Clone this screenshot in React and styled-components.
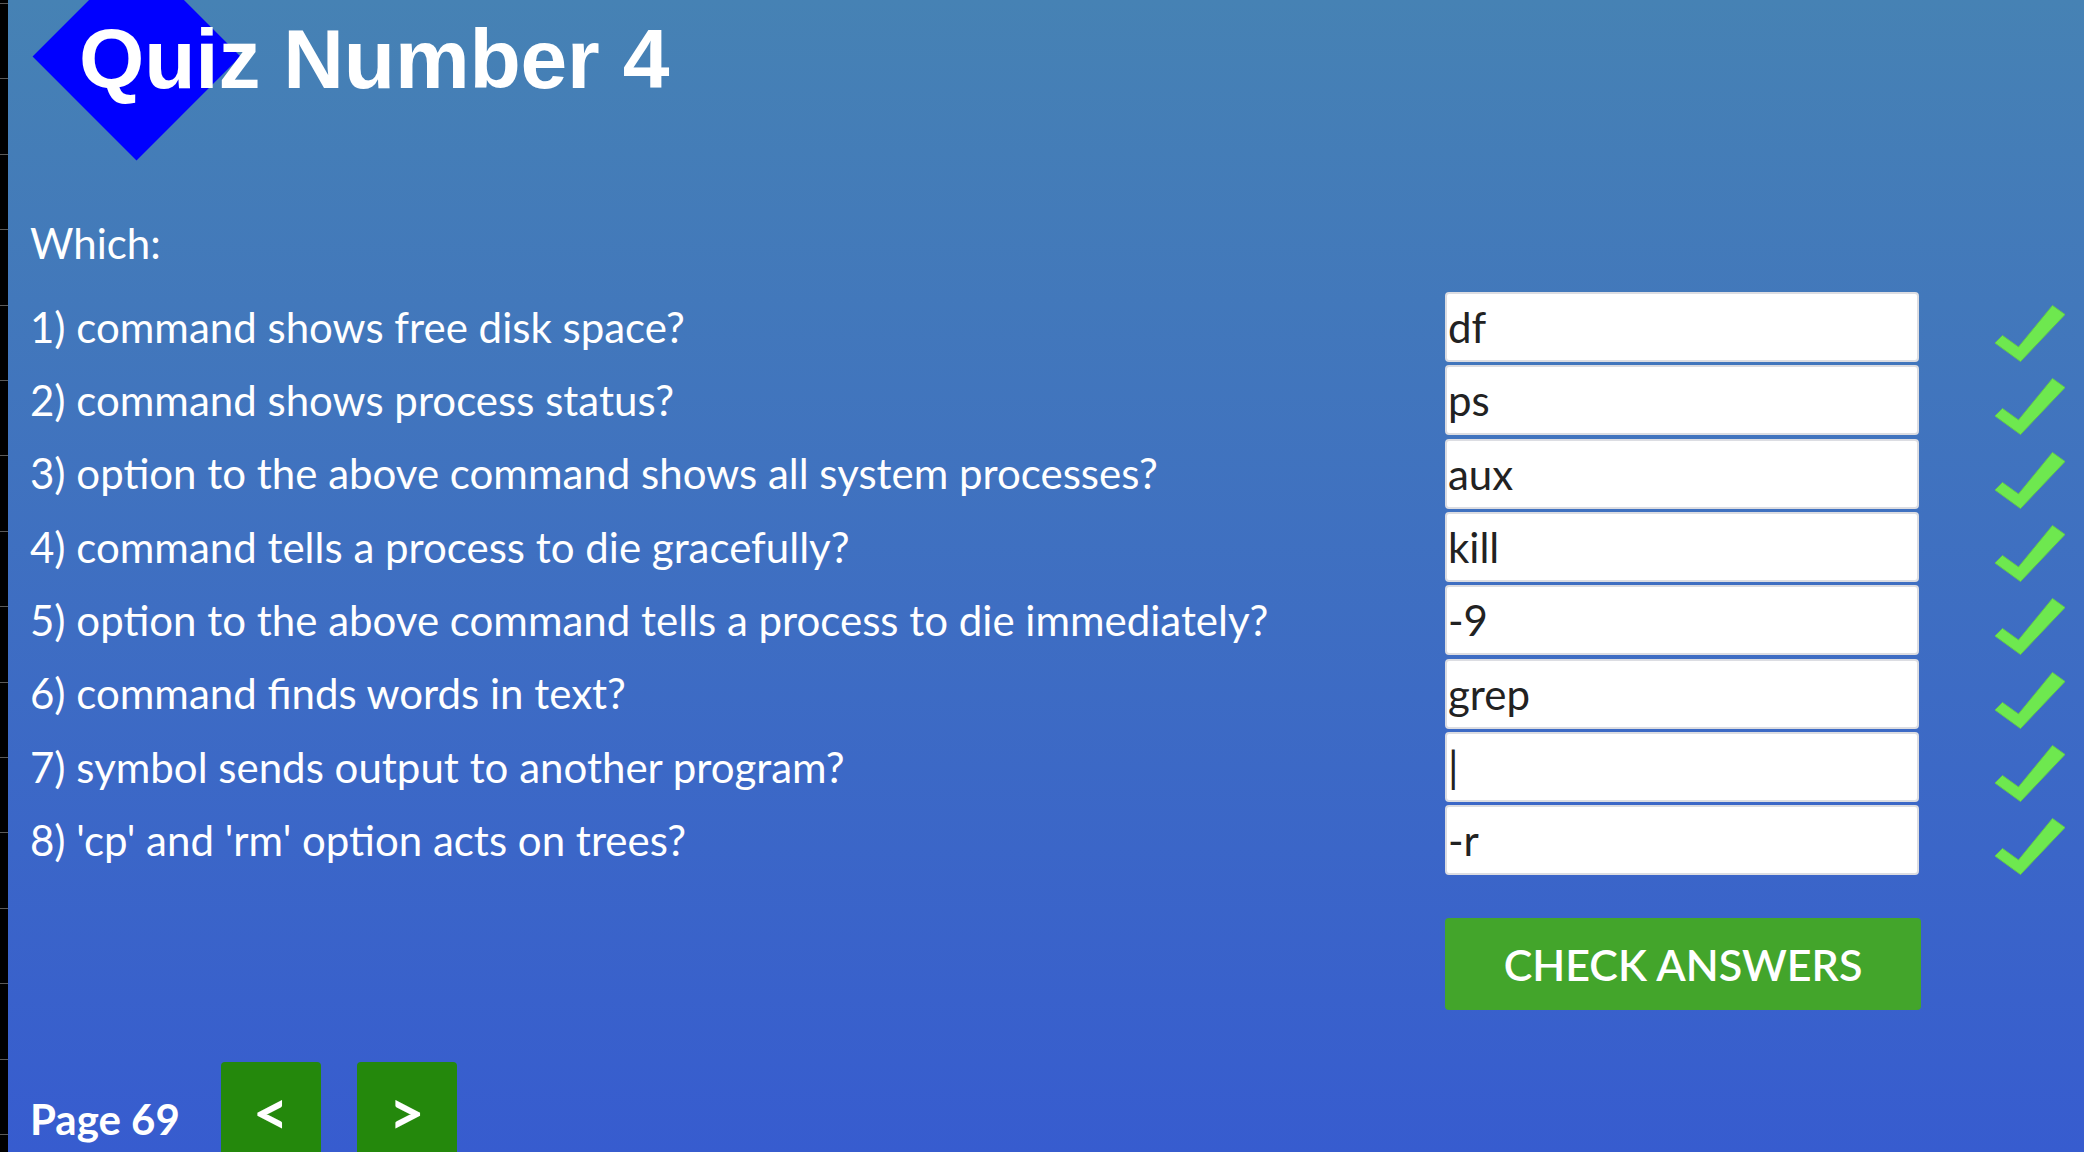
import React from 'react';
import styled, { createGlobalStyle } from 'styled-components';

const GlobalStyle = createGlobalStyle`
  html, body {
    margin: 0;
    padding: 0;
    height: 100%;
    overflow: hidden;
  }
  body {
    font-family: Lato, "Open Sans", sans-serif;
  }
`;

const Page = styled.div`
  display: flex;
  height: 100vh;
  width: 100vw;
  overflow: hidden;
`;

const Ruler = styled.div`
  width: 8px;
  flex-shrink: 0;
  background-color: #000;
  background-image: repeating-linear-gradient(
    to bottom,
    transparent 0,
    transparent 3px,
    #5a5a5a 3px,
    #5a5a5a 4px,
    transparent 4px,
    transparent 75.4px
  );
`;

const Main = styled.main`
  flex: 1;
  display: flex;
  flex-direction: column;
  padding: 0 19px 0 22px;
  background: linear-gradient(to bottom, #4682b4 0%, #375ccf 100%);
  color: #fff;
`;

const Header = styled.header`
  position: relative;
  height: 208px;
  flex-shrink: 0;
`;

const Diamond = styled.div`
  position: absolute;
  left: 33px;
  top: -17px;
  width: 147px;
  height: 147px;
  background: #0000ff;
  transform: rotate(45deg);
`;

const Title = styled.h1`
  position: relative;
  margin: 17px 0 0 49px;
  font-family: "Liberation Sans", Arial, sans-serif;
  font-weight: 700;
  font-size: 84px;
  line-height: 1;
  letter-spacing: -0.2px;
  color: #fff;
`;

const Lead = styled.p`
  margin: 0 0 14px;
  height: 70px;
  line-height: 70px;
  font-size: 42px;
`;

const QuizGrid = styled.div`
  display: grid;
  grid-template-columns: 1fr 474px 70px;
  grid-auto-rows: 70px;
  column-gap: 76px;
  row-gap: 3.33px;
`;

const Question = styled.label`
  display: flex;
  align-items: center;
  font-size: 42px;
  line-height: 1.2;
  white-space: nowrap;
`;

const Answer = styled.input`
  box-sizing: border-box;
  width: 100%;
  height: 70px;
  margin: 0;
  padding: 0 8px 0 1px;
  border: 2px solid #dcdde2;
  border-radius: 4px;
  background: #fff;
  font-family: Lato, "Open Sans", sans-serif;
  font-size: 42px;
  color: #222;
  outline: none;
`;

const Tick = styled.svg`
  align-self: end;
  width: 70px;
  height: 57px;
`;

const Actions = styled.div`
  display: grid;
  grid-template-columns: 1fr 476px 70px;
  column-gap: 74px;
  margin-top: 43px;
`;

const CheckButton = styled.button`
  grid-column: 2;
  height: 92px;
  border: none;
  border-radius: 4px;
  background: #43a52b;
  color: #fff;
  font-family: Lato, "Open Sans", sans-serif;
  font-size: 43px;
  font-weight: 600;
  text-transform: uppercase;
  cursor: pointer;
`;

const Footer = styled.nav`
  display: flex;
  align-items: flex-start;
  margin-top: 52px;
`;

const PageLabel = styled.span`
  margin: 32px 41px 0 0;
  font-size: 42px;
  font-weight: 700;
  line-height: 1.2;
`;

const NavButton = styled.button`
  display: flex;
  justify-content: center;
  align-items: flex-start;
  width: 100px;
  height: 110px;
  margin-right: 36px;
  padding: 12px 0 0;
  border: none;
  border-radius: 4px 4px 0 0;
  background: #24880c;
  color: #fff;
  font-family: Lato, "Open Sans", sans-serif;
  font-size: 62px;
  font-weight: 700;
  line-height: 1.2;
  cursor: pointer;
`;

const CheckMark = () => (
  <Tick viewBox="0 0 70 57">
    <path
      d="M0 38 L7.5 30.5 L23.5 42 L57.5 0.5 L70 9.5 L25.5 56.5 Z"
      fill="#6ee84f"
      stroke="#63c94a"
      strokeWidth="1"
      strokeLinejoin="round"
    />
  </Tick>
);

const questions = [
  { text: '1) command shows free disk space?', answer: 'df' },
  { text: '2) command shows process status?', answer: 'ps' },
  { text: '3) option to the above command shows all system processes?', answer: 'aux' },
  { text: '4) command tells a process to die gracefully?', answer: 'kill' },
  { text: '5) option to the above command tells a process to die immediately?', answer: '-9' },
  { text: '6) command finds words in text?', answer: 'grep' },
  { text: '7) symbol sends output to another program?', answer: '|' },
  { text: "8) 'cp' and 'rm' option acts on trees?", answer: '-r' },
];

const App = () => (
  <>
    <GlobalStyle />
    <Page>
      <Ruler />
      <Main>
        <Header>
          <Diamond />
          <Title>Quiz Number 4</Title>
        </Header>
        <Lead>Which:</Lead>
        <QuizGrid>
          {questions.map((q, i) => (
            <React.Fragment key={i}>
              <Question htmlFor={`q${i}`}>{q.text}</Question>
              <Answer id={`q${i}`} value={q.answer} readOnly />
              <CheckMark />
            </React.Fragment>
          ))}
        </QuizGrid>
        <Actions>
          <CheckButton>Check Answers</CheckButton>
        </Actions>
        <Footer>
          <PageLabel>Page 69</PageLabel>
          <NavButton>&lt;</NavButton>
          <NavButton>&gt;</NavButton>
        </Footer>
      </Main>
    </Page>
  </>
);

export default App;
